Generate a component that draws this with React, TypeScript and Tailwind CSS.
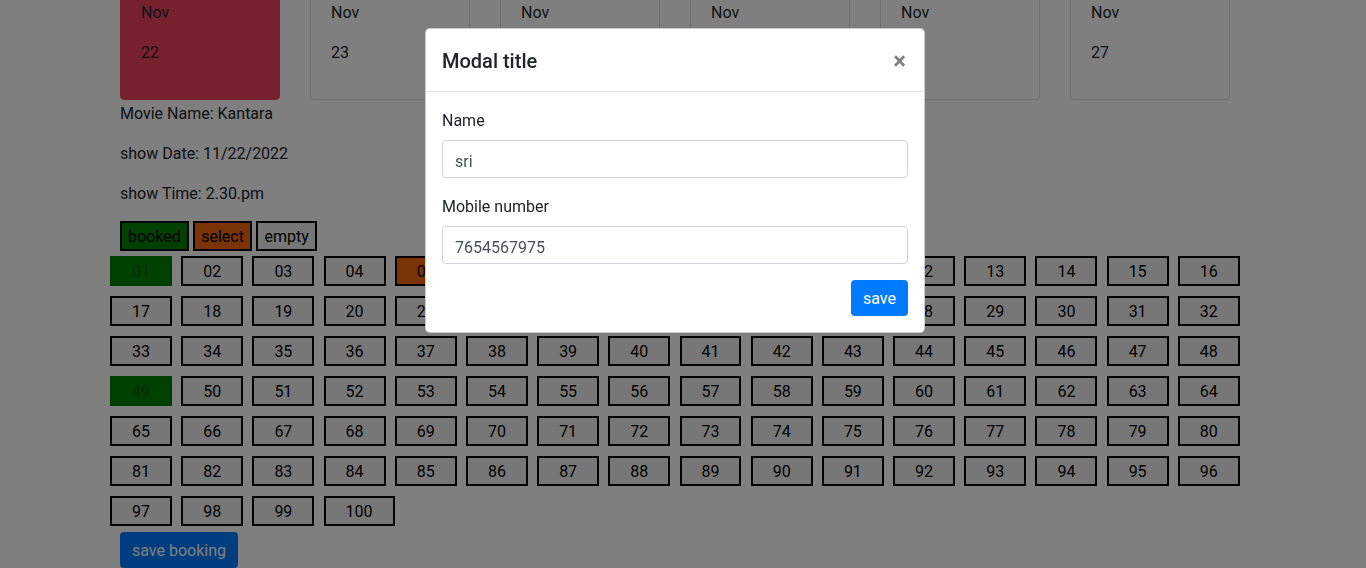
import React from 'react'

const days = ['22', '23', '24', '25', '26', '27']

const seats = Array.from({ length: 100 }, (_, i) => (i + 1 < 10 ? '0' + (i + 1) : String(i + 1)))
const booked = ['01', '49']
const selected = ['05']

const DateCard = ({ day, active }: { day: string; active: boolean }) => (
  <div
    className={`w-[160px] shrink-0 rounded border px-5 pt-[22px] pb-[18px] ${
      active ? 'bg-[#ee405c] border-[#ee405c]' : 'bg-white border-black/[.125]'
    }`}
  >
    <p className="mb-4 leading-6">Nov</p>
    <p className="mb-4 leading-6">{day}</p>
  </div>
)

const Seat = ({ label }: { label: string }) => {
  if (booked.includes(label)) {
    return (
      <button disabled className="m-[5px] justify-self-start border-2 border-[#007a00] bg-[#008000] px-5 pt-[2px] leading-6 text-black/30">
        {label}
      </button>
    )
  }
  const bg = selected.includes(label) ? 'bg-[#f46810]' : 'bg-[#efefef]'
  return (
    <button className={`m-[5px] justify-self-start border-2 border-black ${bg} px-5 pt-[2px] leading-6 text-black`}>
      {label}
    </button>
  )
}

export default function App() {
  return (
    <div className="relative min-h-[568px] overflow-hidden bg-white font-[Roboto,'Liberation_Sans',sans-serif] text-base text-[#212529]">
      <div className="-mt-[22px] pl-[120px]">
        <div className="flex gap-[30px]">
          {days.map((d, i) => (
            <DateCard key={d} day={d} active={i === 0} />
          ))}
        </div>
        <p className="mt-[2px] mb-4 leading-6">Movie Name: Kantara</p>
        <p className="mb-4 leading-6">show Date: 11/22/2022</p>
        <p className="mb-[15px] leading-6">show Time: 2.30.pm</p>
        <div className="flex gap-[4.5px]">
          <button className="border-2 border-black bg-[#008000] px-1.5 pt-[2px] leading-6 text-black">booked</button>
          <button className="border-2 border-black bg-[#f46810] px-1.5 pt-[2px] leading-6 text-black">select</button>
          <button className="border-2 border-black bg-[#efefef] px-1.5 pt-[2px] leading-6 text-black">empty</button>
        </div>
        <div className="-ml-[15px] grid grid-cols-[repeat(16,71.2px)]">
          {seats.map((s) => (
            <Seat key={s} label={s} />
          ))}
        </div>
        <button className="mt-px rounded bg-[#007bff] px-3 pt-[7px] pb-[5px] leading-6 text-white">save booking</button>
      </div>

      <div className="fixed inset-0 bg-black/50" />

      <div className="fixed top-[28px] left-[425px] w-[500px] rounded-[5px] border border-black/20 bg-white">
        <div className="flex items-start justify-between border-b border-[#dee2e6] px-4 pt-[17px] pb-[15px]">
          <h5 className="text-xl leading-[30px] font-medium">Modal title</h5>
          <button className="mr-[2px] text-2xl leading-[30px] font-bold text-black/50">×</button>
        </div>
        <div className="p-4">
          <div className="mb-4">
            <label className="mb-[7px] block pt-px leading-6">Name</label>
            <input
              readOnly
              value="sri"
              className="block h-[38px] w-full rounded border border-[#ced4da] px-3 pt-[8px] pb-[4px] leading-6 text-[#495057]"
            />
          </div>
          <div className="mb-4">
            <label className="mb-[7px] block pt-px leading-6">Mobile number</label>
            <input
              readOnly
              value="7654567975"
              className="block h-[38px] w-full rounded border border-[#ced4da] px-3 pt-[8px] pb-[4px] leading-6 text-[#495057]"
            />
          </div>
          <div className="flex justify-end">
            <button className="rounded bg-[#007bff] px-3 pt-[7px] pb-[5px] leading-6 text-white">save</button>
          </div>
        </div>
      </div>
    </div>
  )
}
